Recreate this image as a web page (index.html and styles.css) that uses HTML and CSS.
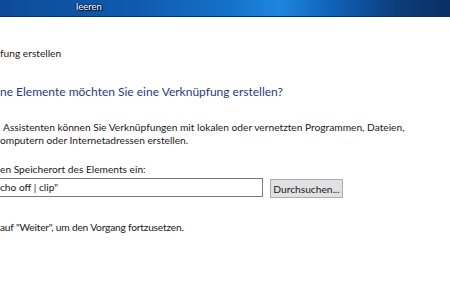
FILE: index.html
```html
<!DOCTYPE html>
<html lang="de">
<head>
<meta charset="utf-8">
<link rel="stylesheet" href="styles.css">
</head>
<body>
<div class="desktop">
  <span class="desk-label">leeren</span>
</div>
<div class="wizard">
  <div class="win-title">fung erstellen</div>
  <h1 class="instruction">ne Elemente möchten Sie eine Verknüpfung erstellen?</h1>
  <p class="intro"><span class="l1">Assistenten können Sie Verknüpfungen mit lokalen oder vernetzten Programmen, Dateien,</span><br>omputern oder Internetadressen erstellen.</p>
  <div class="field-label">en Speicherort des Elements ein:</div>
  <div class="field-row">
    <div class="text-input">cho off | clip"</div>
    <button class="browse">Durchsuchen...</button>
  </div>
  <p class="hint">auf "Weiter", um den Vorgang fortzusetzen.</p>
</div>
</body>
</html>
```
FILE: styles.css
```css
html, body {
  margin: 0;
  padding: 0;
  background: #ffffff;
  overflow: hidden;
}
body {
  width: 450px;
  height: 300px;
  font-family: Lato, "Open Sans", sans-serif;
  color: #1a1a1a;
}
.desktop {
  height: 17px;
  background: linear-gradient(90deg, #0d4b99 0%, #0f5aaf 30%, #1470c8 50%, #1d86df 62%, #0f5fb4 75%, #0b3d7c 88%, #0a2f63 100%);
  border-bottom: 1px solid #0b2f66;
  padding: 1px 0 0 76px;
  box-sizing: border-box;
}
.desk-label {
  display: block;
  color: #ffffff;
  font-size: 9.5px;
  line-height: 11px;
  text-shadow: 0 0 2px #000, 1px 1px 1px #000;
}
.wizard {
  padding-top: 29px;
  font-size: 10.2px;
}
.win-title {
  line-height: 14px;
}
.instruction {
  margin: 23px 0 0 0;
  font-size: 12px;
  font-weight: normal;
  color: #1f3c88;
  line-height: 18px;
}
.intro {
  margin: 20px 0 0 0;
  line-height: 13px;
}
.intro .l1 {
  padding-left: 3px;
}
.field-label {
  margin-top: 15px;
  line-height: 14px;
}
.field-row {
  display: flex;
  align-items: flex-start;
  gap: 7px;
  margin-top: 2px;
}
.text-input {
  width: 263px;
  height: 19px;
  box-sizing: border-box;
  border: 1px solid #7a7a7a;
  border-left: none;
  line-height: 17px;
}
.browse {
  margin-top: 1px;
  width: 73px;
  height: 19px;
  box-sizing: border-box;
  background: #e1e1e1;
  border: 1px solid #adadad;
  border-radius: 0;
  padding: 0;
  font-family: inherit;
  font-size: 10.2px;
  color: #1a1a1a;
}
.hint {
  margin: 22px 0 0 0;
  line-height: 14px;
  letter-spacing: -0.2px;
}
```
